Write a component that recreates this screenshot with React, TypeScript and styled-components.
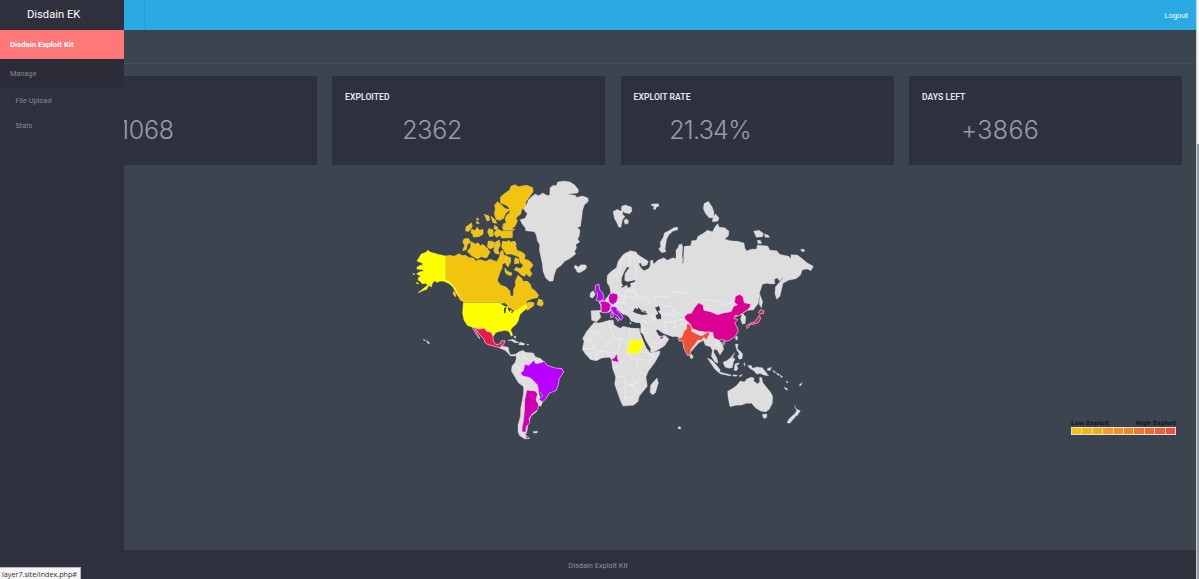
import React from 'react';
import styled, { createGlobalStyle } from 'styled-components';

const Global = createGlobalStyle`
  * { box-sizing: border-box; }
  body { margin: 0; background: #3c4450; font-family: Roboto, "Open Sans", sans-serif; overflow: hidden; }
`;

const Screen = styled.div`
  position: relative;
  display: flex;
  width: 1199px;
  height: 579px;
  overflow: hidden;
`;
const Main = styled.main`
  display: flex;
  flex-direction: column;
  flex: 1;
  min-width: 0;
`;
const ScrollTrack = styled.div`
  width: 3px;
  background: #f4f4f5;
  border-left: 1px solid #c9ccd0;
`;
const ScrollThumb = styled.div`
  margin-top: 144px;
  height: 435px;
  background: #9a9da3;
`;
const TopBar = styled.header`
  height: 30px;
  flex: none;
  display: flex;
  align-items: center;
  background: #2ba9e2;
  color: #fff;
  font-size: 7.5px;
`;
const Toggle = styled.div`
  width: 145px;
  height: 30px;
  border-right: 1px solid #279bd2;
`;
const Logout = styled.a`
  margin-left: auto;
  padding-right: 8px;
`;
const TitleStrip = styled.div`
  height: 34px;
  flex: none;
  border-bottom: 1px solid #444c58;
`;
const Cards = styled.section`
  display: grid;
  grid-template-columns: repeat(4, 273px);
  column-gap: 15.5px;
  padding: 12px 0 0 43.5px;
`;
const Card = styled.article`
  height: 89px;
  padding: 15px 13px 0;
  background: #2f303d;
`;
const CardTitle = styled.h3`
  margin: 0;
  height: 12px;
  line-height: 12px;
  color: #e3e6ee;
  font-size: 8.6px;
  font-weight: 600;
  letter-spacing: 0.05px;
  white-space: nowrap;
`;
const CardValue = styled.div<{ $indent: number; $tracking: number }>`
  margin-top: 11px;
  padding-left: ${(p) => p.$indent}px;
  letter-spacing: ${(p) => p.$tracking}px;
  color: #949db0;
  font-family: Inter, Roboto, sans-serif;
  font-size: 25px;
  line-height: 32px;
  font-weight: 300;
  white-space: nowrap;
`;
const MapArea = styled.section`
  flex: 1;
  display: flex;
  padding: 5px 20px 0 400px;
`;
const MapSvg = styled.svg`
  width: 430px;
  height: 280px;
  flex: none;
`;
const Legend = styled.div`
  width: 105px;
  margin: 250px 0 0 auto;
`;
const LegendLabels = styled.div`
  display: flex;
  justify-content: space-between;
  color: #15181f;
  font-family: "DejaVu Sans", sans-serif;
  font-size: 5.9px;
  line-height: 7px;
  font-weight: 700;
  white-space: nowrap;
`;
const LegendScale = styled.div`
  display: flex;
  gap: 1px;
  height: 8px;
  padding: 1px;
  background: #e9dfd2;
`;
const Swatch = styled.i<{ $color: string }>`
  flex: 1;
  background: ${(p) => p.$color};
`;
const Footer = styled.footer`
  height: 29px;
  flex: none;
  background: #2f303d;
  color: #8e93a1;
  font-size: 7.4px;
  line-height: 31px;
  text-align: center;
`;
const Sidebar = styled.aside`
  position: absolute;
  inset: 0 auto 0 0;
  width: 124px;
  background: #2f303d;
  color: #858995;
  font-size: 7.3px;
`;
const Brand = styled.div`
  height: 30px;
  padding-left: 27px;
  line-height: 29px;
  color: #fff;
  font-size: 11.2px;
`;
const NavItem = styled.a<{ $kind?: 'active' | 'group' | 'sub' }>`
  display: flex;
  align-items: center;
  height: ${(p) => (p.$kind === 'sub' ? 25 : 29)}px;
  padding-left: ${(p) => (p.$kind === 'sub' ? 15.5 : 10)}px;
  background: ${(p) => (p.$kind === 'active' ? '#ff7776' : p.$kind === 'group' ? '#2b2c38' : 'transparent')};
  color: ${(p) => (p.$kind === 'active' ? '#fff' : 'inherit')};
  font-size: ${(p) => (p.$kind === 'active' ? 7.8 : 7.3)}px;
  font-weight: ${(p) => (p.$kind === 'active' ? 700 : 400)};
`;
const StatusTip = styled.div`
  position: absolute;
  left: 0;
  bottom: 0;
  width: 81px;
  height: 12px;
  padding-left: 2px;
  border-top: 1px solid #b9b9bd;
  border-right: 1px solid #b9b9bd;
  background: #f4f4f4;
  color: #34343a;
  font-family: "Open Sans", sans-serif;
  font-size: 7.2px;
  line-height: 13px;
  white-space: nowrap;
`;

const LAND = '#dedede';
const CANADA = '#f0c40f';
const YELLOW = '#ffff00';
const PURPLE = '#b900ff';
const MAGENTA = '#cf00b3';

type Shape = { fill: string; d: string };
type Region = { x: number; y: number; shapes: Shape[]; borders?: string; seas?: string };

const REGIONS: Region[] = [
  {
    x: 400, y: 170,
    shapes: [
      { fill: CANADA, d: 'M136,258 150,256 162,259 178,251 187,257 196,255 205,262 222,265 226,273 240,269 258,274 270,268 290,275 298,262 303,243 309,242 311,255 319,257 318,276 306,284 307,292 298,312 292,331 301,345 318,351 329,362 332,379 340,378 341,358 347,346 346,333 354,316 365,325 369,334 383,334 392,344 394,354 406,363 416,376 412,383 396,386 382,392 377,400 390,396 402,398 401,407 388,417 381,421 380,411 371,416 360,421 354,424 344,423 325,410 309,400 290,396 190,396 180,382 168,358 156,343 136,331Z' },
      { fill: CANADA, d: 'M416,387 427,391 430,402 425,409 411,404ZM172,374 183,381 191,394 181,391ZM160,363 168,370 167,381 160,374Z' },
      { fill: CANADA, d: 'M345,44 355,50 380,46 398,53 399,65 388,81 377,96 379,111 365,118 362,132 348,143 352,153 345,169 333,178 315,176 309,162 319,158 315,147 321,134 329,129 328,114 318,105 302,99 301,82 311,73 329,60 333,49Z' },
      { fill: CANADA, d: 'M293,95 304,104 316,116 329,118 322,126 316,132 311,145 300,151 288,148 283,130 286,119 284,105Z' },
      { fill: CANADA, d: 'M253,133 267,138 269,151 261,153ZM273,139 287,151 290,160 279,158ZM232,143 237,149 229,149ZM231,152 238,161 229,160ZM214,159 217,169 207,184 197,183 198,171ZM215,177 225,182 231,172 239,181 249,178 249,193 236,200 220,201 218,192 213,188ZM266,176 279,179 280,198 269,200 263,186ZM284,166 293,172 292,179 282,177Z' },
      { fill: CANADA, d: 'M286,183 294,178 306,184 337,183 337,203 305,204 301,196 289,202 282,192ZM307,167 327,178 343,177 341,181 310,181Z' },
      { fill: CANADA, d: 'M192,207 205,205 212,216 202,224 199,239 188,242 194,226 188,216ZM213,215 226,222 234,218 242,228 248,223 262,235 270,246 260,264 243,260 233,267 213,256 202,244 211,233Z' },
      { fill: CANADA, d: 'M265,213 275,214 285,218 281,232 270,237 262,230ZM287,216 298,210 301,226 294,238 298,252 287,251 281,242Z' },
      { fill: CANADA, d: 'M307,214 321,215 327,211 334,220 348,229 350,240 369,248 376,256 373,266 390,274 399,285 389,300 396,312 389,321 377,310 375,319 364,315 353,304 343,300 348,292 362,296 370,286 361,278 357,261 344,256 333,252 319,253 312,242 305,232Z' },
      { fill: CANADA, d: 'M318,258 332,263 332,276 324,291 317,282ZM315,294 321,303 336,309 333,317 320,313 315,305ZM345,263 356,267 357,280 343,281ZM331,216 345,214 349,224 338,229Z' },
      { fill: YELLOW, d: 'M84,241 91,247 103,250 118,254 136,258 136,331 145,333 156,343 168,358 178,378 172,374 158,350 148,341 132,334 120,333 112,337 103,332 96,342 94,351 87,346 80,358 68,362 54,368 65,360 76,351 84,344 76,340 66,341 61,334 54,330 56,322 64,319 50,312 58,306 70,304 69,299 51,297 51,292 62,285 66,288 68,280 51,273 58,262 64,252 76,248ZM39,311 44,312 41,315ZM50,337 56,340 51,342Z' },
    ],
  },
  {
    x: 540, y: 170,
    shapes: [
      { fill: LAND, d: 'M53,36 71,33 91,36 105,46 116,60 113,69 82,73 106,76 110,82 128,78 144,84 145,94 133,105 128,120 125,145 121,170 112,171 120,181 118,197 113,207 119,216 107,224 110,233 104,244 107,252 91,265 74,274 64,286 49,297 43,314 39,333 28,334 17,324 9,303 7,282 2,259 -2,239 -1,224 -8,212 -11,196 -17,185 -43,182 -44,174 -54,161 -60,149 -45,145 -38,131 -50,117 -41,106 -35,90 -23,78 -14,72 -5,77 9,69 20,76 29,76 30,53 40,46 49,47Z' },
      { fill: LAND, d: 'M105,285 115,291 123,284 138,285 140,293 134,300 119,308 111,306 109,299 103,294Z' },
      { fill: LAND, d: 'M219,125 232,118 241,123 249,120 248,134 255,139 247,151 243,172 236,171 230,157 224,147ZM245,109 256,105 274,111 276,123 269,131 254,128 244,119ZM256,146 265,151 265,160 256,163 252,154ZM335,102 355,101 357,108 349,112 346,119 339,116 343,110 334,106Z' },
      { fill: LAND, d: 'M412,171 414,179 398,184 387,194 380,207 377,225 375,237 378,245 365,248 356,237 362,230 361,216 370,202 373,189 389,181 401,173Z' },
      { fill: LAND, d: 'M202,316 214,304 229,293 235,272 251,252 271,242 287,245 294,254 314,267 325,274 321,285 307,289 302,278 296,281 303,294 312,302 324,297 330,290 332,271 338,271 341,283 353,271 371,263 382,271 399,263 412,267 409,250 417,224 426,222 427,246 424,268 425,282 432,275 431,254 434,231 450,228 455,230 455,400 260,400 246,390 240,374 250,360 269,352 265,337 254,331 255,311 269,292 261,291 252,306 245,323 244,341 238,354 226,363 221,350 216,340 209,347 202,337Z' },
      { fill: LAND, d: 'M213,350 222,347 222,365 212,368ZM151,371 160,363 165,374 158,384 150,381Z' },
    ],
    seas: 'M257,337 286,331 284,337 271,339 272,350 264,353Z',
    borders: 'M220,340 221,318 238,306 240,285 253,258 270,255 M270,255 284,260 284,280 290,300 282,328 M270,255 269,285 M289,247 291,260 300,278 M284,335 278,352',
  },
  {
    x: 680, y: 170,
    shapes: [
      { fill: LAND, d: 'M72,101 85,94 97,112 102,127 101,143 87,143 76,130 70,116ZM106,131 117,144 114,153 98,156 97,149ZM221,184 237,181 250,190 248,200 229,202ZM252,192 264,195 269,202 256,202ZM232,211 241,211 245,220 234,221ZM361,239 370,237 375,242 368,246Z' },
      { fill: LAND, d: 'M12,230 20,228 32,228 35,212 49,211 54,199 70,190 82,181 98,185 104,172 113,161 118,172 134,173 147,184 145,198 134,207 150,212 173,214 192,219 195,235 200,243 213,238 230,237 232,225 263,228 270,241 290,242 299,253 326,259 333,266 333,254 352,255 365,265 381,278 400,289 393,302 382,297 367,299 362,315 348,326 325,331 309,340 300,379 290,388 285,371 286,351 304,330 312,319 299,333 292,324 283,328 285,341 273,342 262,340 240,344 221,363 226,369 239,370 235,400 220,420 20,430 -12,400 -12,240 3,225 8,229 5,250 9,272 3,286 11,278 12,255Z' },
    ],
    borders: 'M-5,360 10,371 20,368 41,382 64,388 77,394 94,391 112,382 125,389 137,395 153,393 160,390',
  },
  {
    x: 400, y: 300,
    shapes: [
      { fill: YELLOW, d: 'M190,8 292,8 308,12 318,12 327,21 336,35 351,31 365,21 378,14 382,23 371,33 359,44 355,61 349,72 336,83 332,91 338,105 334,109 327,94 315,91 300,94 288,97 280,108 272,96 262,95 253,85 236,87 218,82 202,76 192,60 188,40Z' },
      { fill: '#ed174c', d: 'M217,82 236,87 253,85 261,95 272,96 279,108 280,123 288,134 302,131 303,123 315,122 311,134 305,136 302,143 294,142 281,138 264,134 254,127 252,117 240,105 230,91 225,88 240,116 236,114 224,95Z' },
      { fill: LAND, d: 'M302,137 325,142 327,154 331,164 346,163 345,168 331,168 320,155 312,149 299,145ZM323,121 338,118 357,128 344,128 335,122ZM360,126 375,131 371,136 356,134ZM380,132 387,133 383,136ZM344,108 348,110 346,116 341,110ZM69,118 76,120 74,123ZM80,121 89,129 86,132 81,127Z' },
      { fill: LAND, d: 'M346,163 357,155 369,151 376,157 400,159 406,170 423,176 436,190 439,205 428,240 414,272 420,291 428,305 423,319 412,316 410,335 394,347 384,370 381,395 376,405 386,415 375,417 359,407 354,396 354,375 361,350 362,325 367,300 370,282 371,260 355,248 345,231 334,213 336,198 345,188 349,175Z' },
      { fill: PURPLE, d: 'M397,185 403,181 407,191 422,188 433,184 441,196 465,204 486,206 491,216 478,236 474,256 469,271 447,280 439,295 427,306 416,297 429,286 416,274 412,255 400,242 390,233 370,229 361,219 370,212 374,193 387,196Z' },
      { fill: MAGENTA, d: 'M380,270 406,273 413,282 408,300 416,314 413,329 396,343 387,357 390,368 379,380 378,397 366,396 366,382 370,363 373,330 374,300ZM377,405 389,415 378,415Z' },
      { fill: LAND, d: 'M399,395 412,393 411,399 401,399Z' },
    ],
    seas: 'M304,13 313,9 324,17 318,20ZM312,25 319,20 316,39 312,40ZM323,20 333,27 329,36 324,28ZM333,36 343,33 335,40Z',
    borders: 'M371,187 362,193 M406,173 409,190 M420,177 420,188 M376,157 371,172 388,183 397,180 M343,192 355,201 361,216 M366,229 353,240 M370,230 373,263 382,271 M389,232 400,242 M406,273 412,260 M316,143 312,150',
  },
  {
    x: 570, y: 280,
    shapes: [
      { fill: LAND, d: 'M118,18 112,10 111,-6 140,-4 159,16 153,21 160,27 149,33 146,38 130,38 125,46ZM62,38 69,33 76,42 68,54 61,49Z' },
      { fill: LAND, d: 'M121,40 160,22 194,0 370,0 370,175 350,174 331,178 324,169 308,170 287,163 278,159 262,148 258,153 265,165 272,171 284,166 297,177 284,197 260,212 245,218 238,210 222,180 211,158 212,140 198,136 182,132 175,126 168,109 151,97 143,89 134,86 123,92 118,97 88,96 93,112 80,125 65,121 63,92 93,91 92,75 87,69 93,61 103,63 112,51Z' },
      { fill: LAND, d: 'M73,127 88,129 116,121 130,121 132,134 150,145 160,139 181,144 208,145 210,160 222,186 230,204 241,218 270,213 269,222 255,247 235,274 228,291 232,319 208,348 204,365 190,376 159,378 152,364 141,333 134,313 137,291 127,263 125,239 118,232 96,234 79,242 62,239 46,222 37,208 42,184 38,175 50,154Z' },
      { fill: LAND, d: 'M261,294 265,309 256,339 247,344 240,337 242,315Z' },
      { fill: MAGENTA, d: 'M88,65 105,63 117,68 123,76 119,92 108,99 93,96 94,76ZM119,42 128,39 142,42 144,52 140,66 129,74 118,68 115,54Z' },
      { fill: PURPLE, d: 'M77,16 86,12 90,32 98,38 102,56 90,64 78,61 82,51 82,39 75,31ZM120,82 132,79 142,84 141,92 154,103 159,113 152,121 145,109 132,102 125,91ZM127,95 130,111 122,113 122,101ZM136,112 148,119 144,124Z' },
      { fill: YELLOW, d: 'M180,180 217,181 220,195 214,203 211,218 189,220 173,219 173,205 178,196Z' },
      { fill: MAGENTA, d: 'M141,221 143,236 147,247 130,244 124,238 132,234Z' },
      { fill: PURPLE, d: 'M270,170 281,168 277,178 271,176Z' },
    ],
    seas: 'M189,95 195,84 204,88 205,81 213,91 228,94 233,103 217,105 199,100ZM255,83 267,78 271,90 264,94 274,106 273,118 261,119 257,106 265,101ZM163,102 176,111 184,126 172,131ZM184,124 198,128 210,129 213,142 198,144 183,138ZM210,157 218,162 227,182 242,206 240,215 230,205ZM94,111 112,106 114,121 91,127ZM167,7 196,1 194,7 181,9 182,20 174,23Z',
    borders: 'M60,154 78,155 58,180 43,183 M77,155 105,176 111,195 88,214 M60,182 78,207 M118,123 120,143 130,155 132,174 115,190 M132,174 149,174 172,187 176,203 M178,142 180,180 M207,158 218,181 M149,174 148,205 138,221 109,213 88,216 M40,205 77,207 M60,218 63,238 M80,211 79,242 M95,214 97,233 M113,213 115,231 M174,218 180,231 201,240 221,238 M146,246 164,240 172,249 M130,264 145,259 162,250 M137,290 162,291 165,311 188,314 209,292 M201,240 203,269 227,287 M178,318 207,309 M165,320 164,359 M190,319 205,343 M223,215 253,228 239,241 220,239 M164,350 186,357 198,338 M145,40 160,50 170,32 194,36 208,52 M194,5 188,22 197,40 207,50 229,52 241,70 226,74 M129,78 144,67 163,68 162,51 188,51 206,60 220,58 M164,71 180,87 190,83 M151,81 160,97 M250,62 252,52 265,50 292,50 307,37 330,36 353,43 370,48 M213,93 234,99 247,114 M216,119 232,130 247,120 249,101 M249,119 269,118 285,126 287,158 M273,108 299,100 315,113 325,103 339,112 M284,126 318,126 334,133 M218,133 221,155 245,164 M247,189 269,190 282,175 M243,199 270,202 M278,78 298,77 319,94 344,95 M318,126 309,148',
  },
  {
    x: 670, y: 280,
    shapes: [
      { fill: LAND, d: 'M20,50 64,40 235,5 278,10 270,35 248,62 243,80 230,92 218,99 227,112 226,130 217,133 212,117 199,110 180,128 155,172 145,178 158,193 161,208 150,225 142,211 133,207 131,217 141,235 144,250 135,246 124,229 127,211 121,200 106,196 100,181 85,190 57,222 40,175 20,170ZM268,38 278,65 274,84 269,73Z' },
      { fill: '#db0091', d: 'M86,68 99,75 102,91 122,95 143,104 162,98 183,95 191,79 202,74 193,67 196,49 209,43 219,50 223,68 243,72 239,83 231,91 216,101 204,108 196,106 191,115 204,119 194,129 203,144 204,155 195,170 180,180 168,184 158,178 147,181 131,174 128,157 111,157 88,154 67,146 61,132 46,119 43,110 53,101 65,99 72,85ZM158,186 165,184 164,193 159,192Z' },
      { fill: '#ee503a', d: 'M49,132 60,132 66,145 65,154 89,166 98,166 116,154 119,162 109,181 102,172 94,181 84,181 76,192 64,207 59,226 53,227 42,206 38,182 29,184 24,175 35,172 42,154 50,145Z' },
      { fill: '#ed1566', d: 'M271,89 282,93 280,101 269,102 265,99ZM268,106 272,116 265,128 249,133 239,133 237,140 232,146 229,138 242,129 254,126 259,118Z' },
      { fill: LAND, d: 'M62,221 68,226 69,234 63,236 60,230ZM112,234 125,240 137,253 151,270 148,280 134,267ZM149,276 164,280 184,285 181,288 150,281ZM190,284 202,286 199,289 188,288ZM207,288 218,283 212,290ZM159,247 170,242 186,230 195,238 190,247 187,263 176,265 165,261ZM195,252 207,248 208,252 200,256 204,265 199,272 192,271ZM196,171 202,168 203,177 198,181ZM196,192 204,192 202,206 211,214 218,222 216,236 208,238 203,229 208,222 199,208ZM184,231 194,218 188,232ZM221,251 225,248 224,259ZM233,257 243,256 248,265 260,261 277,263 289,278 296,288 281,285 270,280 261,283 251,272 238,264ZM292,266 304,262 301,271 293,272ZM308,271 317,276 313,279ZM318,278 328,283 325,287ZM329,284 338,290 334,293Z' },
      { fill: LAND, d: 'M230,297 244,292 252,294 251,303 263,312 269,305 269,291 275,293 279,309 292,325 301,336 308,348 307,370 298,388 287,396 272,393 260,386 252,379 245,370 229,370 215,375 198,376 180,380 177,367 174,350 173,334 190,324 199,317 211,303 223,306ZM277,403 291,402 290,412 283,416 279,411ZM349,302 355,307 351,309ZM343,321 353,327 351,331 345,327ZM388,314 396,308 394,315 389,318ZM373,376 380,388 391,392 381,408 374,402 380,392ZM373,402 379,407 367,421 360,430 351,428 357,417ZM24,441 31,440 32,447 25,446Z' },
    ],
    seas: 'M205,105 215,105 211,117 204,119 195,115ZM188,112 197,107 195,116 205,121 202,129 193,125Z',
    borders: 'M65,150 90,160 99,165 M99,164 110,171 112,189 M132,176 142,190 151,208 M133,195 145,196 M218,105 228,112 M0,110 20,101 40,106 M0,126 20,121 44,118 M5,92 20,101 M20,38 42,34 58,42 64,53 87,68 M87,62 93,58 112,58 140,64 166,74 190,66 M270,60 269,76 M10,145 40,130',
  },
];

function WorldMap() {
  return (
    <MapSvg viewBox="400 170 430 280">
      {REGIONS.map((r) => (
        <g key={`${r.x}-${r.y}`} transform={`translate(${r.x} ${r.y}) scale(.33333)`} strokeLinejoin="round">
          {r.shapes.filter((s) => s.fill === LAND).map((s, i) => (
            <path key={i} d={s.d} fill={s.fill} stroke={s.fill} strokeWidth="1" />
          ))}
          {r.seas && <path d={r.seas} fill="#3c4450" />}
          {r.borders && <path d={r.borders} fill="none" stroke="#f2f2f2" strokeWidth="2" />}
          {r.shapes.filter((s) => s.fill !== LAND).map((s, i) => (
            <path
              key={i}
              d={s.d}
              fill={s.fill}
              stroke={s.fill === CANADA ? '#f0d060' : s.fill === YELLOW ? '#ffff50' : '#efd9e6'}
              strokeWidth={s.fill === CANADA || s.fill === YELLOW ? 1.5 : 2}
            />
          ))}
          {r.y === 300 && <path d={r.seas} fill="#3c4450" />}
        </g>
      ))}
    </MapSvg>
  );
}

const STATS = [
  { title: 'LOADS', value: '11068', indent: 53.3, tracking: -0.3 },
  { title: 'EXPLOITED', value: '2362', indent: 57.2, tracking: -0.2 },
  { title: 'EXPLOIT RATE', value: '21.34%', indent: 35.7, tracking: -0.7 },
  { title: 'DAYS LEFT', value: '+3866', indent: 39, tracking: 0.3 },
];

const SCALE = ['#f2c40f', '#f1b914', '#efad19', '#eea01e', '#ed9423', '#eb8828', '#ea7b2d', '#e96f32', '#e86337', '#ee503a'];

export default function App() {
  return (
    <Screen>
      <Global />
      <Main>
        <TopBar>
          <Toggle />
          <Logout>Logout</Logout>
        </TopBar>
        <TitleStrip />
        <Cards>
          {STATS.map((s) => (
            <Card key={s.title}>
              <CardTitle>{s.title}</CardTitle>
              <CardValue $indent={s.indent} $tracking={s.tracking}>{s.value}</CardValue>
            </Card>
          ))}
        </Cards>
        <MapArea>
          <WorldMap />
          <Legend>
            <LegendLabels>
              <span>Low Exploit</span>
              <span>High Exploit</span>
            </LegendLabels>
            <LegendScale>
              {SCALE.map((c) => (
                <Swatch key={c} $color={c} />
              ))}
            </LegendScale>
          </Legend>
        </MapArea>
        <Footer>Disdain Exploit Kit</Footer>
      </Main>
      <ScrollTrack>
        <ScrollThumb />
      </ScrollTrack>
      <Sidebar>
        <Brand>Disdain EK</Brand>
        <NavItem $kind="active">Disdain Exploit Kit</NavItem>
        <NavItem $kind="group">Manage</NavItem>
        <NavItem $kind="sub">File Upload</NavItem>
        <NavItem $kind="sub">Stats</NavItem>
      </Sidebar>
      <StatusTip>layer7.site/index.php#</StatusTip>
    </Screen>
  );
}
